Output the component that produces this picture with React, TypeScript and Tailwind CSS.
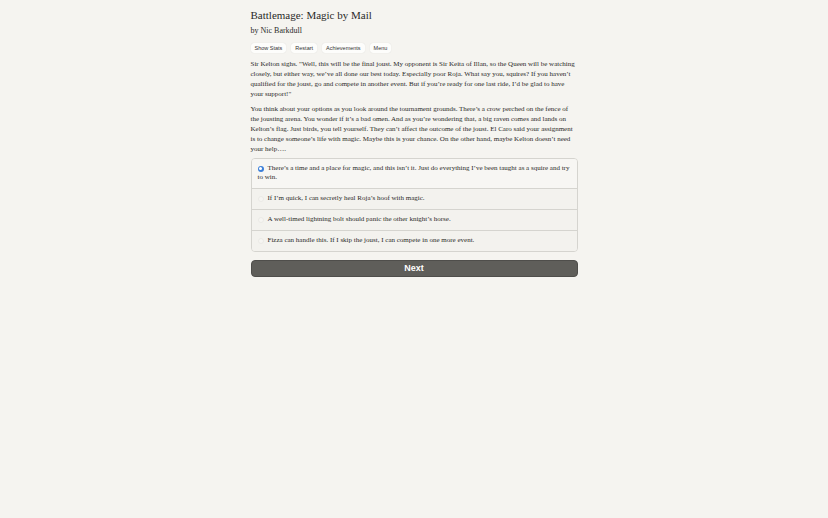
import { useState } from 'react'

const paragraphs = [
  'Sir Kelton sighs. "Well, this will be the final joust. My opponent is Sir Keita of Illan, so the Queen will be watching closely, but either way, we\u2019ve all done our best today. Especially poor Roja. What say you, squires? If you haven\u2019t qualified for the joust, go and compete in another event. But if you\u2019re ready for one last ride, I\u2019d be glad to have your support!"',
  'You think about your options as you look around the tournament grounds. There\u2019s a crow perched on the fence of the jousting arena. You wonder if it\u2019s a bad omen. And as you\u2019re wondering that, a big raven comes and lands on Kelton\u2019s flag. Just birds, you tell yourself. They can\u2019t affect the outcome of the joust. El Caro said your assignment is to change someone\u2019s life with magic. Maybe this is your chance. On the other hand, maybe Kelton doesn\u2019t need your help\u2026.',
]

const choices = [
  'There\u2019s a time and a place for magic, and this isn\u2019t it. Just do everything I\u2019ve been taught as a squire and try to win.',
  'If I\u2019m quick, I can secretly heal Roja\u2019s hoof with magic.',
  'A well-timed lightning bolt should panic the other knight\u2019s horse.',
  'Fizza can handle this. If I skip the joust, I can compete in one more event.',
]

const menu = ['Show Stats', 'Restart', 'Achievements', 'Menu']

export default function App() {
  const [picked, setPicked] = useState(0)

  return (
    <div className="min-h-screen bg-[#f5f4f0] text-[#2a2a28]" style={{ fontFamily: '"Liberation Serif", serif' }}>
      <div className="mx-auto w-[327px] pt-[8px]">
        <h1 className="text-[11px] leading-[14px]">Battlemage: Magic by Mail</h1>
        <p className="mt-[4px] text-[8px] leading-[10px]">by Nic Barkdull</p>

        <div className="mt-[7px] flex gap-[5px] font-['Liberation_Sans',sans-serif]">
          {menu.map((label) => (
            <button
              key={label}
              className="h-[10px] rounded-[3px] bg-[#fdfdfb] px-[4px] text-[5.5px] leading-[10px] text-[#333] shadow-[0_0_1px_rgba(0,0,0,0.15)]"
            >
              {label}
            </button>
          ))}
        </div>

        <div className="mt-[6px] space-y-[4.5px] text-[7px] leading-[10px]">
          {paragraphs.map((p, i) => (
            <p key={i}>{p}</p>
          ))}
        </div>

        <div className="mt-[4px] overflow-hidden rounded-[4px] border border-[#d5d4cf]">
          {choices.map((c, i) => (
            <label
              key={i}
              onClick={() => setPicked(i)}
              className={`flex cursor-pointer items-start py-[5.25px] pl-[6px] pr-[3px] text-[7px] leading-[9.5px] ${
                i > 0 ? 'border-t border-[#d5d4cf]' : ''
              } ${picked === i ? 'bg-[#f7f6f3]' : 'bg-[#f3f2ee]'}`}
            >
              <span className="mr-[4px] mt-[1.8px] flex shrink-0 items-center justify-center">
                {picked === i ? (
                  <span className="flex h-[6px] w-[6px] items-center justify-center rounded-full bg-[#3b7fd9]">
                    <span className="h-[2.4px] w-[2.4px] rounded-full bg-white" />
                  </span>
                ) : (
                  <span className="h-[6px] w-[6px] rounded-full border border-[#ebeae6] bg-[#f6f5f2]" />
                )}
              </span>
              <span className="-ml-[10px] indent-[10px]">{c}</span>
            </label>
          ))}
        </div>

        <button className="mt-[8px] h-[17px] w-full rounded-[4px] border border-[#4f4e4b] bg-[#5f5e5a] font-['Liberation_Sans',sans-serif] text-[9px] font-bold text-white">
          Next
        </button>
      </div>
    </div>
  )
}
